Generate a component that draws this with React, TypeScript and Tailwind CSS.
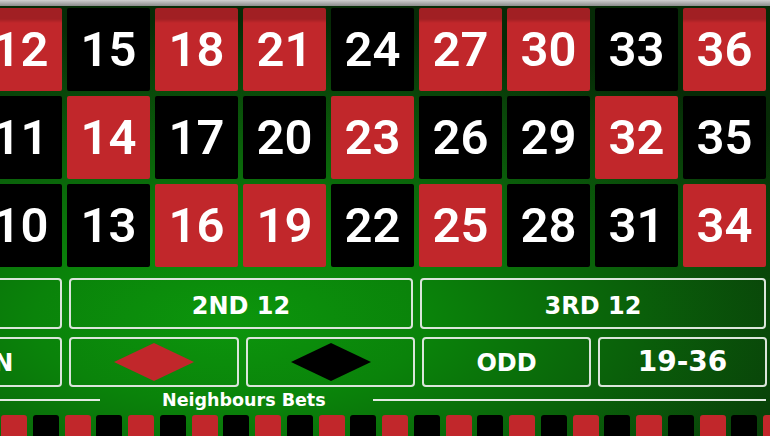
import React from "react";

type Pocket = { n: number; red: boolean };

const REDS = [1, 3, 5, 7, 9, 12, 14, 16, 18, 19, 21, 23, 25, 27, 30, 32, 34, 36];

const rows: Pocket[][] = [
  [12, 15, 18, 21, 24, 27, 30, 33, 36],
  [11, 14, 17, 20, 23, 26, 29, 32, 35],
  [10, 13, 16, 19, 22, 25, 28, 31, 34],
].map((r) => r.map((n) => ({ n, red: REDS.includes(n) })));

function Cell({ p, top }: { p: Pocket; top: boolean }) {
  const bg = p.red
    ? top
      ? "bg-[linear-gradient(#a11f23_0px,#a11f23_11px,#c1272b_15px,#c1272b_100%)]"
      : "bg-[#c1272b]"
    : "bg-black";
  return (
    <div
      className={`w-[83px] h-[83px] shrink-0 rounded-[2px] flex items-center justify-center ${bg}`}
    >
      <span className="font-['Roboto'] font-semibold text-[49px] leading-none text-white">
        {p.n}
      </span>
    </div>
  );
}

function Box({
  w,
  children,
  className = "",
}: {
  w: string;
  children?: React.ReactNode;
  className?: string;
}) {
  return (
    <div
      className={`${w} shrink-0 h-full rounded-[4px] border-2 border-[#dbe5db] flex items-center justify-center text-white font-bold whitespace-nowrap ${className}`}
    >
      {children}
    </div>
  );
}

function Diamond({ color }: { color: string }) {
  return (
    <svg width="82" height="40" viewBox="0 0 82 40">
      <polygon points="41,1 81,20 41,39 1,20" fill={color} />
    </svg>
  );
}

export default function App() {
  const strip = Array.from({ length: 25 }, (_, i) => i % 2 === 0);
  return (
    <div className="w-[770px] h-[436px] overflow-hidden bg-[#0a6a0a] bg-[radial-gradient(ellipse_700px_300px_at_230px_320px,#0c960c_0%,#0a830a_28%,#0a600a_58%,#094309_82%,#062a06_100%)] font-['DejaVu_Sans',sans-serif]">
      {/* rail */}
      <div className="h-[6px] bg-[linear-gradient(#cfcfcf,#8c8c8c)]" />

      {/* number grid */}
      <div className="mt-[2px] ml-[-21px] flex flex-col gap-[5px]">
        {rows.map((r, ri) => (
          <div key={ri} className="flex gap-[5px]">
            {r.map((p) => (
              <Cell key={p.n} p={p} top={ri === 0} />
            ))}
          </div>
        ))}
      </div>

      {/* dozens */}
      <div className="mt-[11px] ml-[-282px] h-[51px] flex gap-[7px]">
        <Box w="w-[344px]" className="text-[24px] pt-[5px]">
          1ST 12
        </Box>
        <Box w="w-[344px]" className="text-[24px] pt-[5px]">
          2ND 12
        </Box>
        <Box w="w-[346px]" className="text-[24px] pt-[5px]">
          3RD 12
        </Box>
      </div>

      {/* even money */}
      <div className="mt-[8px] ml-[-107px] h-[50px] flex gap-[7px]">
        <Box w="w-[169px]" className="text-[24px] pt-[2px]">
          EVEN
        </Box>
        <Box w="w-[170px]">
          <Diamond color="#c1272b" />
        </Box>
        <Box w="w-[169px]">
          <Diamond color="#000000" />
        </Box>
        <Box w="w-[169px]" className="text-[24px] pt-[2px]">
          ODD
        </Box>
        <Box w="w-[169px]" className="text-[28px]">
          19-36
        </Box>
      </div>

      {/* neighbours header */}
      <div className="mt-[4px] h-[18px] flex items-center">
        <div className="w-[100px] h-[2px] bg-[#e3ebe3]" />
        <span className="ml-[62px] text-[17.5px] leading-[18px] font-bold text-white">
          Neighbours Bets
        </span>
        <div className="ml-[47px] w-[393px] h-[2px] bg-[#e3ebe3]" />
      </div>

      {/* racetrack strip */}
      <div className="mt-[6px] pl-[1px] flex gap-[5.75px]">
        {strip.map((red, i) => (
          <div
            key={i}
            className={`w-[26px] h-[26px] shrink-0 rounded-[3px] ${red ? "bg-[#c1272b]" : "bg-black"}`}
          />
        ))}
      </div>
    </div>
  );
}
